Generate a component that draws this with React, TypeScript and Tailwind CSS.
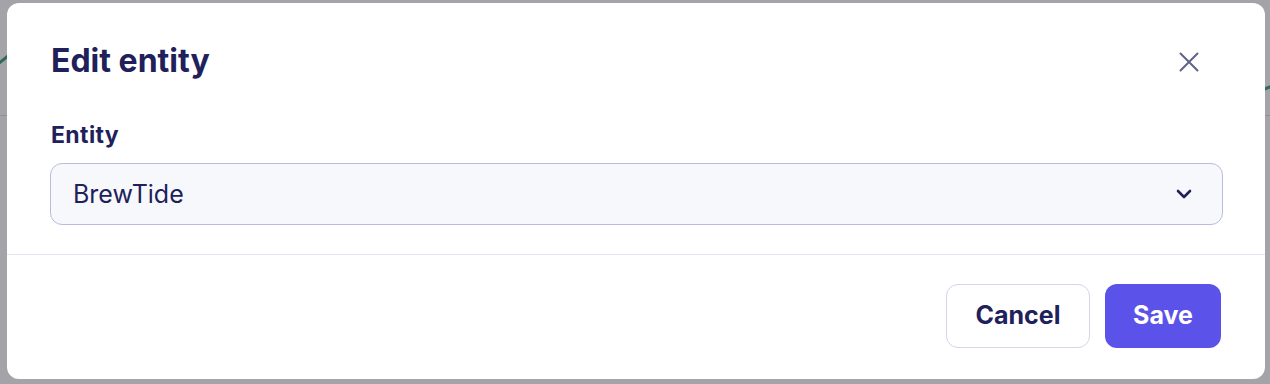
import React from "react";

export default function App() {
  return (
    <div
      className="relative w-full h-[384px] overflow-hidden bg-[#a3a3a8] pt-[3px] px-[7px]"
      style={{ fontFamily: "Inter, 'Noto Sans', sans-serif" }}
    >
      <svg className="absolute inset-0" width="1270" height="384" aria-hidden>
        <line x1="0" y1="115.5" x2="1270" y2="115.5" stroke="#8f9099" strokeWidth="1" />
        <polyline points="-2,64 8,56" fill="none" stroke="#2f6b5a" strokeWidth="3" />
        <polyline points="1262,90 1272,86" fill="none" stroke="#2f6b5a" strokeWidth="3" />
      </svg>
      <div className="relative flex flex-col w-[1258px] h-[376px] bg-white rounded-[12px]">
        <div className="flex items-start justify-between pl-[44px] pr-[66px] pt-[38px]">
          <h1 className="text-[32px] leading-[40px] font-bold text-[#20215a]">Edit entity</h1>
          <button className="mt-[11px] text-[#5f6388]">
            <svg width="20" height="20" viewBox="0 0 20 20" fill="none" stroke="currentColor" strokeWidth="2" strokeLinecap="round">
              <path d="M1.5 1.5L18.5 18.5M18.5 1.5L1.5 18.5" />
            </svg>
          </button>
        </div>
        <div className="flex flex-col pl-[43px] pr-[42px] pt-[40px] pb-[29px]">
          <label className="pl-px text-[23px] leading-[28px] font-bold tracking-[0.4px] text-[#20215a]">Entity</label>
          <div className="mt-[14px] h-[62px] flex items-center justify-between rounded-[12px] border border-[#b9bae0] bg-[#f7f8fc] pl-[22px] pr-[30px]">
            <span className="text-[25px] leading-[32px] text-[#20215a]">BrewTide</span>
            <svg width="16" height="10" viewBox="0 0 16 10" fill="none" stroke="#20215a" strokeWidth="2.6" strokeLinecap="round" strokeLinejoin="round">
              <path d="M2 2L8 8L14 2" />
            </svg>
          </div>
        </div>
        <div className="h-px bg-[#e4e4f2]" />
        <div className="flex justify-end gap-[15px] pt-[29px] pr-[44px]">
          <button className="h-[64px] w-[144px] rounded-[12px] border border-[#d3d5e8] bg-white text-[25px] font-bold text-[#20215a]">
            Cancel
          </button>
          <button className="h-[64px] w-[116px] rounded-[12px] bg-[#5b52ea] text-[25px] font-bold text-white">
            Save
          </button>
        </div>
      </div>
    </div>
  );
}
